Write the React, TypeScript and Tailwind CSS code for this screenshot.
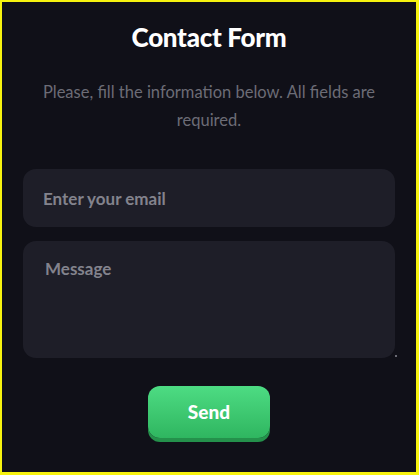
import { useState } from "react";

export default function App() {
  const [email, setEmail] = useState("");
  const [message, setMessage] = useState("");

  return (
    <div className="w-[419px] h-[475px] bg-[#f7f30f] pl-[2px] pt-[2px] pr-[3px] pb-[3px] font-['Lato',sans-serif]">
      <div className="h-full bg-[#101018] flex flex-col items-center px-[21px]">
        <h1 className="mt-[20px] text-white text-[26px] leading-[30px] font-black tracking-[-0.3px]">
          Contact Form
        </h1>
        <p className="mt-[26px] text-center text-[#6c6c76] text-[16.5px] leading-[28px] px-[14px]">
          Please, fill the information below. All fields are required.
        </p>
        <input
          type="email"
          value={email}
          onChange={(e) => setEmail(e.target.value)}
          placeholder="Enter your email"
          className="mt-[35px] w-full h-[58px] shrink-0 rounded-[13px] bg-[#1e1e28] px-[20px] text-[17px] font-bold text-[#d0d0d8] placeholder:text-[#83838d] outline-none"
        />
        <div className="relative mt-[14px] w-full">
          <textarea
            value={message}
            onChange={(e) => setMessage(e.target.value)}
            placeholder="Message"
            className="block w-full h-[117px] resize-none rounded-[13px] bg-[#1e1e28] px-[22px] py-[15px] text-[17px] font-bold text-[#d0d0d8] placeholder:text-[#83838d] outline-none"
          />
          <span className="absolute right-[-2px] bottom-[1px] w-[2px] h-[2px] bg-[#6a6a74]" />
        </div>
        <button className="mt-[28px] w-[122px] h-[52px] shrink-0 rounded-[12px] bg-gradient-to-b from-[#4ddc83] to-[#2fb660] shadow-[0_4px_0_#24914b] text-white text-[19px] font-black">
          Send
        </button>
      </div>
    </div>
  );
}
